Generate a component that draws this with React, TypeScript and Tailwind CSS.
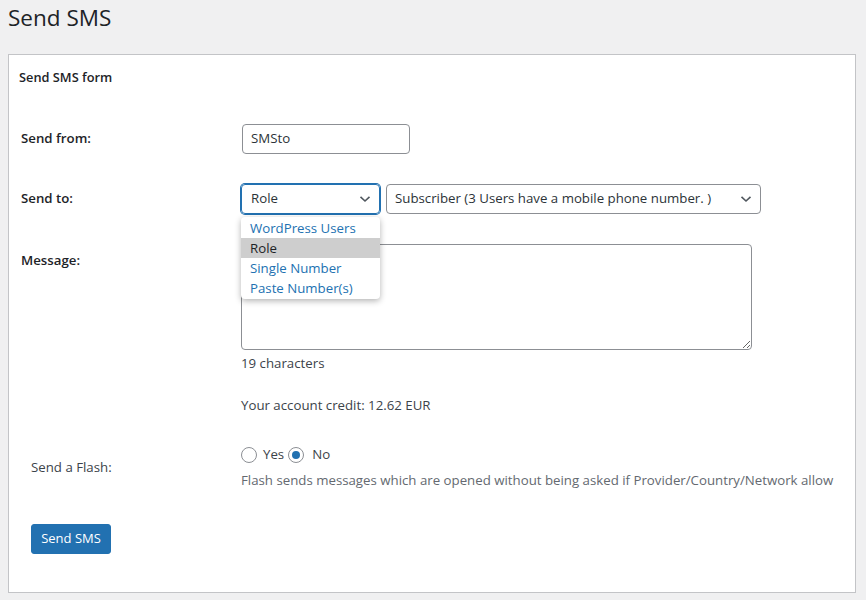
import React from "react";

const font = { fontFamily: '"Open Sans", "Noto Sans", sans-serif' };

function Chevron() {
  return (
    <svg width="12" height="8" viewBox="0 0 12 8" className="shrink-0">
      <path d="M1.5 1.8 L6 6 L10.5 1.8" fill="none" stroke="#50575e" strokeWidth="1.6" />
    </svg>
  );
}

function Radio({ checked }: { checked?: boolean }) {
  return (
    <span className="inline-flex h-4 w-4 items-center justify-center rounded-full border border-[#8c8f94] bg-white">
      {checked && <span className="h-2 w-2 rounded-full bg-[#2271b1]" />}
    </span>
  );
}

export default function App() {
  return (
    <div
      className="min-h-[600px] w-[866px] bg-[#f0f0f1] text-[#3c434a] [font-family:'Open_Sans','Noto_Sans',sans-serif]"
      style={font}
    >
      <div className="pl-[8px] pr-[10px] pt-[3px]">
        <h1 className="text-[22.5px] font-normal leading-[29px] text-[#1d2327]">Send SMS</h1>
        <div className="relative mt-[22px] border border-[#c3c4c7] bg-white pb-[38px] pl-[12px] pt-[12px]">
          <h2 className="-ml-[2px] text-[12.8px] font-semibold leading-[20px] text-[#1d2327]">Send SMS form</h2>

          {/* Send from */}
          <div className="mt-[37px] flex items-center">
            <div className="w-[220px] text-[13.25px] font-semibold text-[#1d2327]">Send from:</div>
            <div className="ml-[1px] flex h-[30px] w-[168px] items-center rounded-[4px] border border-[#8c8f94] px-[8px] text-[13.25px] text-[#2c3338]">
              SMSto
            </div>
          </div>

          {/* Send to */}
          <div className="mt-[30px] flex items-center">
            <div className="w-[220px] text-[13.25px] font-semibold text-[#1d2327]">Send to:</div>
            <div className="flex gap-[6px]">
              <div className="flex h-[30px] w-[139px] items-center justify-between rounded-[4px] border border-[#2271b1] pl-[9px] pr-[8px] text-[13.25px] text-[#2c3338] shadow-[0_0_0_1px_#2271b1]">
                <span>Role</span>
                <Chevron />
              </div>
              <div className="flex h-[30px] w-[375px] items-center justify-between rounded-[4px] border border-[#8c8f94] pl-[8px] pr-[8px] text-[13.25px] text-[#2c3338]">
                <span>Subscriber (3 Users have a mobile phone number. )</span>
                <Chevron />
              </div>
            </div>
          </div>

          {/* Message */}
          <div className="mt-[30px] flex items-start">
            <div className="w-[220px] pt-[6px] text-[13.25px] font-semibold leading-[20px] text-[#1d2327]">Message:</div>
            <div className="flex flex-col">
              <textarea
                className="h-[106px] w-[511px] rounded-[4px] border border-[#8c8f94] bg-white"
                defaultValue=""
              />
              <div className="mt-[3px] text-[13.25px] leading-[20px]">19 characters</div>
              <div className="mt-[22px] text-[13.25px] leading-[20px]">Your account credit: 12.62 EUR</div>
            </div>
          </div>

          {/* Flash */}
          <div className="mt-[30px] flex items-center">
            <div className="w-[220px] pl-[10px] text-[13.25px] text-[#3c434a]">Send a Flash:</div>
            <div className="flex flex-col">
              <div className="flex h-[20px] items-center text-[13.25px]">
                <Radio />
                <span className="ml-[6px]">Yes</span>
                <span className="ml-[4px] inline-flex">
                  <Radio checked />
                </span>
                <span className="ml-[8px]">No</span>
              </div>
              <div className="mt-[5px] text-[13.25px] leading-[20px] text-[#646970]">
                Flash sends messages which are opened without being asked if Provider/Country/Network allow
              </div>
            </div>
          </div>

          <div className="mt-[34px] pl-[10px]">
            <button className="h-[30px] w-[80px] rounded-[3px] border border-[#2271b1] bg-[#2271b1] text-[13px] text-white">
              Send SMS
            </button>
          </div>

          {/* Dropdown overlay */}
          <div className="absolute left-[232px] top-[162px] w-[139px] rounded-[4px] bg-white py-[1px] text-[13.25px] leading-[20px] text-[#2271b1] shadow-[0_2px_6px_rgba(0,0,0,0.3)]">
            <div className="px-[9px]">WordPress Users</div>
            <div className="bg-[#cecece] px-[9px] text-[#1d2327]">Role</div>
            <div className="px-[9px]">Single Number</div>
            <div className="px-[9px]">Paste Number(s)</div>
          </div>
        </div>
      </div>
    </div>
  );
}
